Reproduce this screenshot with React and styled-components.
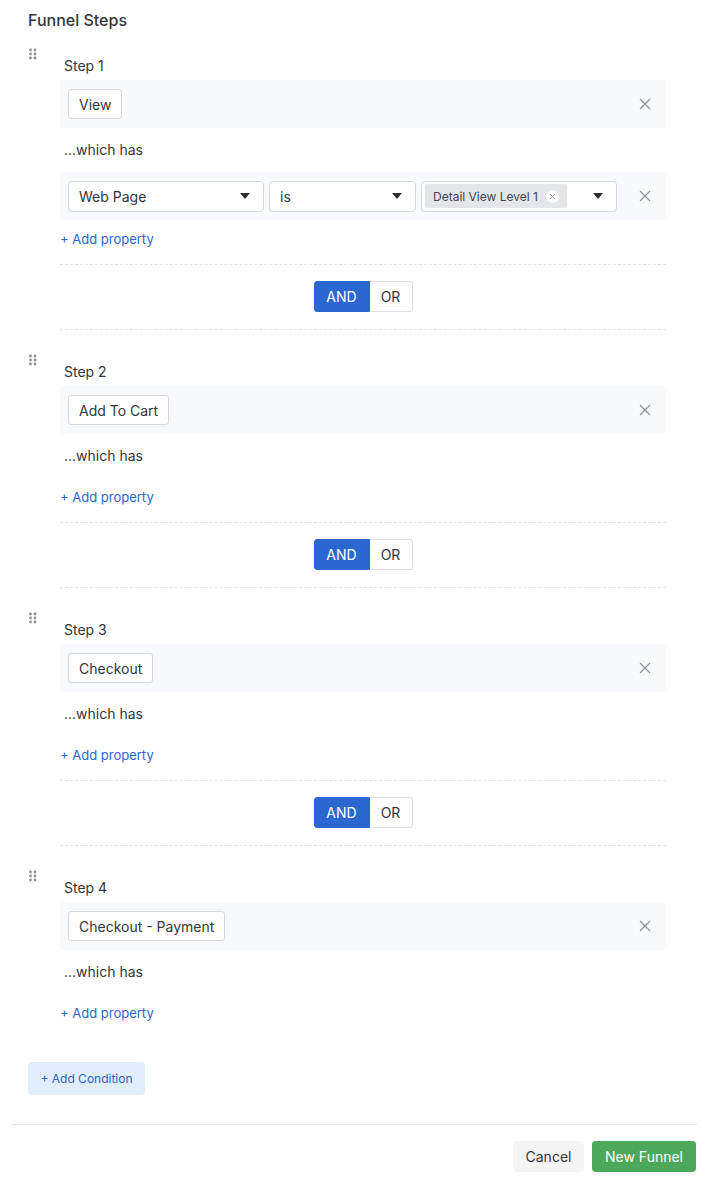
import React from "react";
import styled, { createGlobalStyle } from "styled-components";

const Global = createGlobalStyle`
  html, body { margin: 0; padding: 0; background: #fff; }
  body { font-family: Inter, "Noto Sans", "Liberation Sans", sans-serif; color: #32363d; font-size: 14px; }
  * { box-sizing: border-box; }
`;

const Root = styled.div`
  width: 685px;
  margin-left: 12px;
`;

const Inner = styled.div`
  padding: 10px 31px 0 16px;
  display: flex;
  flex-direction: column;
  align-items: stretch;
`;

const Title = styled.h2`
  margin: 0 0 26px;
  font-size: 16px;
  line-height: 20px;
  font-weight: 500;
  color: #32363d;
`;

const Step = styled.section`
  display: flex;
`;

const Handle = styled.div`
  width: 32px;
  flex: none;
  margin-top: -8px;
  svg { display: block; }
`;

const Content = styled.div`
  flex: 1;
  min-width: 0;
  display: flex;
  flex-direction: column;
`;

const StepLabel = styled.div`
  padding-left: 4px;
  font-size: 14px;
  line-height: 20px;
  margin-bottom: 4px;
`;

const Row = styled.div`
  height: 48px;
  background: #f8f9fc;
  border-radius: 4px;
  display: flex;
  align-items: center;
  padding: 0 8px;
  gap: ${(p) => p.$gap || 0}px;
`;

const EventButton = styled.button`
  height: 30px;
  padding: 0 10px;
  background: #fff;
  border: 1px solid #d5d8df;
  border-radius: 3px;
  font: inherit;
  font-size: 14px;
  color: #32363d;
  cursor: pointer;
`;

const Spacer = styled.div`
  flex: 1;
`;

const CloseBtn = styled.button`
  width: 24px;
  height: 24px;
  border: 0;
  background: none;
  padding: 0;
  margin-right: 1px;
  display: flex;
  align-items: center;
  justify-content: center;
  cursor: pointer;
`;

const WhichHas = styled.div`
  padding-left: 4px;
  margin: 12px 0;
  line-height: 20px;
`;

const Select = styled.div`
  width: ${(p) => p.$w}px;
  height: 31px;
  flex: none;
  background: #fff;
  border: 1px solid #d6d9e0;
  border-radius: 4px;
  display: flex;
  align-items: center;
  padding: 0 13px 0 ${(p) => (p.$tag ? 3 : 10)}px;
  font-size: 14px;
`;

const Tag = styled.span`
  height: 24px;
  display: inline-flex;
  align-items: center;
  gap: 8px;
  padding: 0 8px;
  background: #e3e5e9;
  border-radius: 3px;
  font-size: 12px;
  color: #444850;
`;

const TagX = styled.span`
  width: 13px;
  height: 13px;
  border-radius: 50%;
  background: #fff;
  display: inline-flex;
  align-items: center;
  justify-content: center;
`;

const AddProperty = styled.a`
  align-self: flex-start;
  margin-top: 10px;
  font-size: 13px;
  line-height: 18px;
  color: #2c66cf;
  text-decoration: none;
  cursor: pointer;
`;

const Divider = styled.div`
  margin: 16px 0 32px;
  border-top: 1px dashed #e2e3e6;
  border-bottom: 1px dashed #e2e3e6;
  padding: 16px 0 17px;
  display: flex;
  justify-content: center;
`;

const Toggle = styled.div`
  display: flex;
  height: 31px;
`;

const ToggleBtn = styled.button`
  width: ${(p) => p.$w}px;
  height: 31px;
  font: inherit;
  font-size: 14px;
  border: 1px solid ${(p) => (p.$active ? "#2b67d1" : "#dcdfe5")};
  background: ${(p) => (p.$active ? "#2b67d1" : "#fff")};
  color: ${(p) => (p.$active ? "#fff" : "#32363d")};
  border-radius: ${(p) => (p.$first ? "3px 0 0 3px" : "0 3px 3px 0")};
  ${(p) => (!p.$first ? "border-left: 0;" : "")}
  padding: 0;
  cursor: pointer;
`;

const AddCondition = styled.button`
  align-self: flex-start;
  margin-top: 40px;
  height: 33px;
  width: 117px;
  border: 0;
  border-radius: 4px;
  background: #e1edfd;
  color: #2c64c8;
  font: inherit;
  font-size: 12px;
  cursor: pointer;
`;

const Footer = styled.footer`
  margin-top: 29px;
  border-top: 1px solid #e6e6e8;
  padding-top: 16px;
  display: flex;
  justify-content: flex-end;
  gap: 8px;
  padding-right: 1px;
`;

const FootBtn = styled.button`
  height: 31px;
  width: ${(p) => p.$w}px;
  border: 0;
  border-radius: 4px;
  font: inherit;
  font-size: 14px;
  background: ${(p) => (p.$primary ? "#4ca95b" : "#f4f4f5")};
  color: ${(p) => (p.$primary ? "#fff" : "#32363d")};
  cursor: pointer;
`;

const Dots = () => (
  <svg width="12" height="14" viewBox="0 0 12 14">
    {[0, 1, 2].map((r) =>
      [0, 1].map((c) => (
        <circle key={r + "-" + c} cx={2.5 + c * 4.5} cy={2 + r * 4} r="1.4" fill="#8a8d93" />
      ))
    )}
  </svg>
);

const XIcon = () => (
  <svg width="12" height="12" viewBox="0 0 12 12">
    <path d="M1 1 L11 11 M11 1 L1 11" stroke="#8f9299" strokeWidth="1.2" fill="none" />
  </svg>
);

const Caret = () => (
  <svg width="10" height="6" viewBox="0 0 10 6" style={{ marginLeft: "auto" }}>
    <path d="M0 0 H10 L5 6 Z" fill="#2a2d33" />
  </svg>
);

const SmallX = () => (
  <svg width="7" height="7" viewBox="0 0 7 7">
    <path d="M1 1 L6 6 M6 1 L1 6" stroke="#9a9ca2" strokeWidth="1" fill="none" />
  </svg>
);

const steps = [
  { name: "View", filter: true },
  { name: "Add To Cart" },
  { name: "Checkout" },
  { name: "Checkout - Payment" },
];

export default function App() {
  return (
    <Root>
      <Global />
      <Inner>
        <Title>Funnel Steps</Title>
        {steps.map((s, i) => (
          <Step key={i}>
            <Handle>
              <Dots />
            </Handle>
            <Content>
              <StepLabel>Step {i + 1}</StepLabel>
              <Row>
                <EventButton>{s.name}</EventButton>
                <Spacer />
                <CloseBtn aria-label="Remove">
                  <XIcon />
                </CloseBtn>
              </Row>
              <WhichHas>...which has</WhichHas>
              {s.filter && (
                <Row $gap={5}>
                  <Select $w={196}>
                    Web Page
                    <Caret />
                  </Select>
                  <Select $w={147}>
                    is
                    <Caret />
                  </Select>
                  <Select $w={196} $tag>
                    <Tag>
                      Detail View Level 1
                      <TagX>
                        <SmallX />
                      </TagX>
                    </Tag>
                    <Caret />
                  </Select>
                  <Spacer />
                  <CloseBtn aria-label="Remove filter">
                    <XIcon />
                  </CloseBtn>
                </Row>
              )}
              <AddProperty>+ Add property</AddProperty>
              {i < steps.length - 1 && (
                <Divider>
                  <Toggle>
                    <ToggleBtn $w={56} $active $first>
                      AND
                    </ToggleBtn>
                    <ToggleBtn $w={43}>OR</ToggleBtn>
                  </Toggle>
                </Divider>
              )}
            </Content>
          </Step>
        ))}
        <AddCondition>+ Add Condition</AddCondition>
      </Inner>
      <Footer>
        <FootBtn $w={71}>Cancel</FootBtn>
        <FootBtn $w={104} $primary>
          New Funnel
        </FootBtn>
      </Footer>
    </Root>
  );
}
